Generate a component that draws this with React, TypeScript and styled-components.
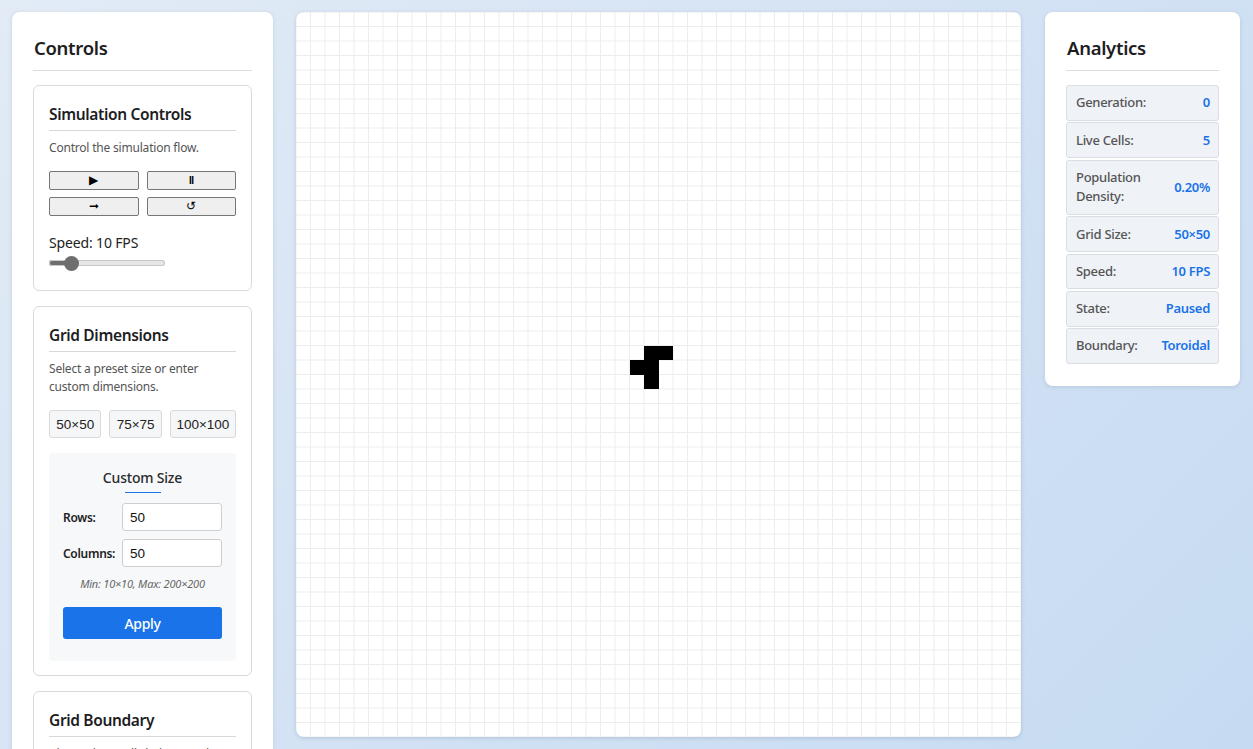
import React, { useState } from "react";
import styled, { createGlobalStyle } from "styled-components";

const Global = createGlobalStyle`
  html, body { margin: 0; padding: 0; }
  body {
    font-family: "Noto Sans", "Open Sans", sans-serif;
    color: #222;
    background: linear-gradient(135deg, #e2ebf6 0%, #d3e2f4 50%, #c4daf1 100%);
    min-height: 100vh;
  }
`;

const Page = styled.div`
  display: grid;
  grid-template-columns: 261px 725px 196px;
  column-gap: 23px;
  padding: 12px;
  align-items: start;
`;

const Panel = styled.aside`
  background: #fff;
  border-radius: 8px;
  box-shadow: 0 1px 4px rgba(60, 80, 110, 0.15);
  padding: 22px 21px 22px;
`;

const RightPanel = styled(Panel)`
  margin-left: 1px;
`;

const PanelTitle = styled.h2`
  margin: 0;
  font-size: 18.5px;
  font-weight: 600;
  letter-spacing: -0.3px;
  line-height: 28px;
  padding: 0 1px 8px;
  border-bottom: 1px solid #dcdcdc;
  color: #1d1d1f;
`;

const Stack = styled.div`
  display: flex;
  flex-direction: column;
  gap: 15px;
  margin-top: 14px;
`;

const Card = styled.section`
  border: 1px solid #dadada;
  border-radius: 6px;
  padding: 16px 15px 14px;
`;

const CardTitle = styled.h3`
  margin: 0;
  font-size: 15.5px;
  font-weight: 600;
  letter-spacing: -0.35px;
  line-height: 24px;
  padding-bottom: 4px;
  border-bottom: 1px solid #d8d8d8;
  color: #1d1d1f;
`;

const Desc = styled.p`
  margin: 8px 0 0;
  font-size: 12px;
  letter-spacing: -0.2px;
  line-height: 18px;
  color: #555;
`;

const ControlGrid = styled.div`
  display: grid;
  grid-template-columns: 1fr 1fr;
  gap: 7px 8px;
  margin-top: 14px;
`;

const CtlButton = styled.button`
  height: 19px;
  padding: 0;
  margin: 0;
  border: 1px solid #767676;
  border-radius: 2px;
  background: #efefef;
  font-family: "Liberation Sans", Arial, sans-serif;
  font-size: 12px;
  color: #000;
  line-height: 17px;
  display: flex;
  align-items: center;
  justify-content: center;
`;

const PauseGlyph = styled.span`
  font-family: "Liberation Sans", Arial, sans-serif;
  font-weight: 700;
  font-size: 10px;
  letter-spacing: -0.5px;
`;

const SpeedLabel = styled.div`
  margin-top: 17px;
  font-size: 14px;
  letter-spacing: -0.15px;
  line-height: 20px;
  color: #222;
`;

const Range = styled.input<{ $pct: number }>`
  -webkit-appearance: none;
  appearance: none;
  display: block;
  width: 116px;
  height: 16px;
  margin: 2px 0 5px;
  background: transparent;
  &::-webkit-slider-runnable-track {
    height: 6px;
    border-radius: 3px;
    background: linear-gradient(to right, #6e6e6e 0 ${(p) => p.$pct}%, #e6e6e6 ${(p) => p.$pct}% 100%);
    box-shadow: inset 0 0 0 1px #c8c8c8;
  }
  &::-webkit-slider-thumb {
    -webkit-appearance: none;
    width: 15px;
    height: 15px;
    border-radius: 50%;
    background: #6e6e6e;
    margin-top: -4.5px;
    border: none;
  }
`;

const PresetRow = styled.div`
  display: flex;
  gap: 8px;
  margin-top: 14px;
`;

const Preset = styled.button<{ $w: number }>`
  width: ${(p) => p.$w}px;
  height: 28px;
  padding: 0;
  border: 1px solid #d9d9d9;
  border-radius: 3px;
  background: #f5f6f7;
  font-family: "Liberation Sans", Arial, sans-serif;
  font-size: 13.5px;
  color: #222;
`;

const CustomBox = styled.div`
  margin-top: 15px;
  background: #f6f8fa;
  border-radius: 4px;
  padding: 14px 14px 22px;
  display: flex;
  flex-direction: column;
`;

const CustomTitle = styled.div`
  align-self: center;
  font-size: 14px;
  font-weight: 500;
  letter-spacing: -0.2px;
  line-height: 22px;
  color: #2b2b2b;
  display: flex;
  flex-direction: column;
  align-items: center;
  &::after {
    content: "";
    display: block;
    width: 36px;
    height: 1px;
    background: #1a73e8;
    margin-top: 3px;
  }
`;

const FieldRow = styled.label`
  display: grid;
  grid-template-columns: 59px 1fr;
  align-items: center;
  margin-top: 8px;
  &:first-of-type { margin-top: 10px; }
`;

const FieldLabel = styled.span`
  font-size: 12px;
  font-weight: 600;
  letter-spacing: -0.3px;
  color: #222;
`;

const Input = styled.input`
  box-sizing: border-box;
  width: 100%;
  height: 28px;
  border: 1px solid #cfcfcf;
  border-radius: 3px;
  padding: 0 7px;
  font-family: "Liberation Sans", Arial, sans-serif;
  font-size: 13.5px;
  color: #111;
  background: #fff;
`;

const Hint = styled.div`
  margin-top: 9px;
  text-align: center;
  font-size: 11px;
  font-style: italic;
  letter-spacing: -0.2px;
  color: #666;
  line-height: 16px;
`;

const Apply = styled.button`
  margin-top: 15px;
  height: 32px;
  border: none;
  border-radius: 3px;
  background: #1a73e8;
  color: #fff;
  font-family: inherit;
  font-size: 14px;
  letter-spacing: -0.3px;
  font-weight: 500;
`;

const Board = styled.main`
  width: 725px;
  height: 725px;
  background-color: #fff;
  background-image:
    linear-gradient(to right, #ececec 1px, transparent 1px),
    linear-gradient(to bottom, #ececec 1px, transparent 1px);
  background-size: 14.5px 14.5px;
  background-position: -0.5px -0.5px;
  border-radius: 8px;
  box-shadow: 0 1px 4px rgba(60, 80, 110, 0.2);
  overflow: hidden;
  display: grid;
  grid-template-columns: repeat(50, 1fr);
  grid-template-rows: repeat(50, 1fr);
`;

const Cell = styled.div<{ $r: number; $c: number }>`
  grid-row: ${(p) => p.$r + 1};
  grid-column: ${(p) => p.$c + 1};
  background: #000;
`;

const StatList = styled.div`
  display: flex;
  flex-direction: column;
  gap: 1.5px;
  margin-top: 14px;
`;

const Stat = styled.div`
  display: flex;
  align-items: center;
  justify-content: space-between;
  padding: 7.25px 8px 7px;
  background: #eff2f7;
  border: 1px solid #d9dee5;
  border-radius: 3px;
  font-size: 13px;
  letter-spacing: -0.3px;
  line-height: 19.5px;
`;

const StatLabel = styled.span`
  font-weight: 500;
  color: #555;
  max-width: 80px;
  padding-left: 1px;
`;

const StatValue = styled.span`
  font-weight: 600;
  color: #1a73e8;
`;

const live: [number, number][] = [
  [23, 24],
  [23, 25],
  [24, 23],
  [24, 24],
  [25, 24],
];

const stats: [string, string][] = [
  ["Generation:", "0"],
  ["Live Cells:", "5"],
  ["Population Density:", "0.20%"],
  ["Grid Size:", "50×50"],
  ["Speed:", "10 FPS"],
  ["State:", "Paused"],
  ["Boundary:", "Toroidal"],
];

export default function App() {
  const [speed, setSpeed] = useState(10);
  const pct = ((speed - 1) / 59) * 100;
  return (
    <>
      <Global />
      <Page>
        <Panel>
          <PanelTitle>Controls</PanelTitle>
          <Stack>
            <Card>
              <CardTitle>Simulation Controls</CardTitle>
              <Desc>Control the simulation flow.</Desc>
              <ControlGrid>
                <CtlButton aria-label="Play">▶</CtlButton>
                <CtlButton aria-label="Pause">
                  <PauseGlyph>II</PauseGlyph>
                </CtlButton>
                <CtlButton aria-label="Step">➞</CtlButton>
                <CtlButton aria-label="Reset">↺</CtlButton>
              </ControlGrid>
              <SpeedLabel>Speed: {speed} FPS</SpeedLabel>
              <Range
                type="range"
                min={1}
                max={60}
                value={speed}
                $pct={pct}
                onChange={(e) => setSpeed(Number(e.target.value))}
              />
            </Card>
            <Card>
              <CardTitle>Grid Dimensions</CardTitle>
              <Desc>Select a preset size or enter custom dimensions.</Desc>
              <PresetRow>
                <Preset $w={53}>50×50</Preset>
                <Preset $w={53}>75×75</Preset>
                <Preset $w={67}>100×100</Preset>
              </PresetRow>
              <CustomBox>
                <CustomTitle>Custom Size</CustomTitle>
                <FieldRow>
                  <FieldLabel>Rows:</FieldLabel>
                  <Input defaultValue="50" />
                </FieldRow>
                <FieldRow>
                  <FieldLabel>Columns:</FieldLabel>
                  <Input defaultValue="50" />
                </FieldRow>
                <Hint>Min: 10×10, Max: 200×200</Hint>
                <Apply>Apply</Apply>
              </CustomBox>
            </Card>
            <Card>
              <CardTitle>Grid Boundary</CardTitle>
              <Desc>Choose how cells behave at the edges of the grid.</Desc>
              <Desc>Toroidal wraps around; finite treats edges as dead cells.</Desc>
            </Card>
          </Stack>
        </Panel>
        <Board>
          {live.map(([r, c]) => (
            <Cell key={`${r}-${c}`} $r={r} $c={c} />
          ))}
        </Board>
        <RightPanel>
          <PanelTitle>Analytics</PanelTitle>
          <StatList>
            {stats.map(([l, v]) => (
              <Stat key={l}>
                <StatLabel>{l}</StatLabel>
                <StatValue>{v}</StatValue>
              </Stat>
            ))}
          </StatList>
        </RightPanel>
      </Page>
    </>
  );
}
